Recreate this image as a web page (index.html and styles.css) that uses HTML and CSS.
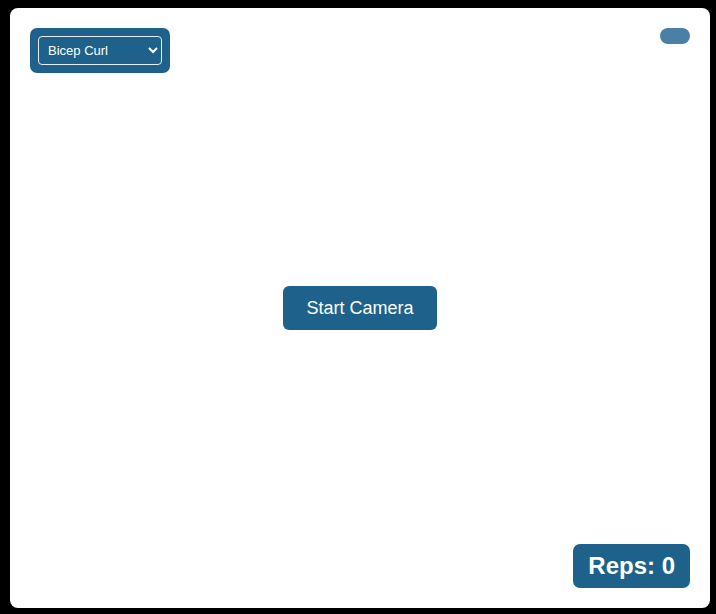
FILE: index.html
```html
<!DOCTYPE html>
<html lang="en">
<head>
<meta charset="utf-8">
<title>Rep Counter</title>
<link rel="stylesheet" href="styles.css">
</head>
<body>
<main class="stage">
  <div class="exercise-picker">
    <select class="exercise-select" aria-label="Exercise">
      <option>Bicep Curl</option>
      <option>Squat</option>
      <option>Push Up</option>
    </select>
  </div>
  <button class="toggle" aria-label="Toggle"></button>
  <button class="start-btn">Start Camera</button>
  <div class="reps">Reps: 0</div>
</main>
</body>
</html>
```
FILE: styles.css
```css
html, body {
  margin: 0;
  padding: 0;
  background: #000;
  height: 100%;
}
body {
  padding: 8px 0 0 10px;
  box-sizing: border-box;
  font-family: "Liberation Sans", Arial, sans-serif;
}
.stage {
  position: relative;
  width: 700px;
  height: 600px;
  background: #fff;
  border-radius: 8px;
  display: flex;
  align-items: center;
  justify-content: center;
}
.exercise-picker {
  position: absolute;
  top: 20px;
  left: 20px;
  width: 140px;
  height: 45px;
  box-sizing: border-box;
  padding: 8px;
  background: #1e628c;
  border-radius: 7px;
}
.exercise-select {
  width: 124px;
  height: 29px;
  box-sizing: border-box;
  background-color: #1e628c;
  color: #fff;
  border: 1px solid #e8eef3;
  border-radius: 4px;
  font: 13px "Liberation Sans", Arial, sans-serif;
  padding: 0 4px 0 5px;
}
.toggle {
  position: absolute;
  top: 20px;
  right: 20px;
  width: 30px;
  height: 16px;
  padding: 0;
  border: none;
  border-radius: 8px;
  background: #4a80a7;
}
.start-btn {
  background: #1e628c;
  color: #fff;
  border: none;
  border-radius: 6px;
  padding: 0 23px;
  font: 18px "Liberation Sans", Arial, sans-serif;
  line-height: 20px;
  height: 44px;
  white-space: nowrap;
  cursor: pointer;
}
.reps {
  position: absolute;
  right: 20px;
  bottom: 20px;
  height: 44px;
  box-sizing: border-box;
  padding: 0 15px;
  display: flex;
  align-items: center;
  background: #1e628c;
  color: #fff;
  border-radius: 7px;
  font: bold 24px "Liberation Sans", Arial, sans-serif;
}
```
